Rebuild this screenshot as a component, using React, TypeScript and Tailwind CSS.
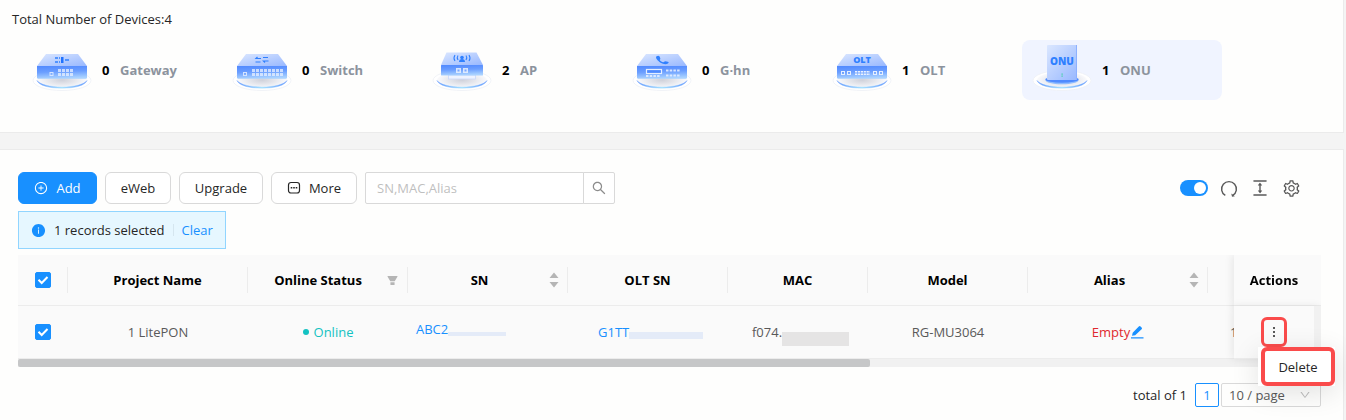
import React, { useState } from 'react';
import {
  AiFillFilter,
  AiFillInfoCircle,
  AiOutlineColumnHeight,
  AiOutlineDown,
  AiOutlinePlusCircle,
  AiOutlineSearch,
  AiOutlineSetting,
} from 'react-icons/ai';
import clsx from 'clsx';

type DeviceKind = 'Gateway' | 'Switch' | 'AP' | 'G·hn' | 'OLT' | 'ONU';

const devices: { kind: DeviceKind; count: number }[] = [
  { kind: 'Gateway', count: 0 },
  { kind: 'Switch', count: 0 },
  { kind: 'AP', count: 2 },
  { kind: 'G·hn', count: 0 },
  { kind: 'OLT', count: 1 },
  { kind: 'ONU', count: 1 },
];

// Shared gradients for the device drawings
function DeviceDefs() {
  return (
    <svg width="0" height="0" className="absolute" aria-hidden="true">
      <defs>
        <linearGradient id="lid" x1="0" y1="0" x2="1" y2="1">
          <stop offset="0" stopColor="#dbe7ff" />
          <stop offset="1" stopColor="#98b8ff" />
        </linearGradient>
        <linearGradient id="front" x1="0" y1="0" x2="0.15" y2="1">
          <stop offset="0" stopColor="#5089ff" />
          <stop offset="0.5" stopColor="#6c9fff" />
          <stop offset="1" stopColor="#a9d2ff" />
        </linearGradient>
        <linearGradient id="ring" x1="0" y1="0" x2="1" y2="0">
          <stop offset="0" stopColor="#5f97ff" />
          <stop offset="0.5" stopColor="#a8e2ff" />
          <stop offset="1" stopColor="#5f97ff" />
        </linearGradient>
        <radialGradient id="plate">
          <stop offset="0" stopColor="#cfd1da" />
          <stop offset="0.8" stopColor="#f1f2f6" />
          <stop offset="1" stopColor="#fafafc" />
        </radialGradient>
      </defs>
    </svg>
  );
}

function Ports({ x, y, count, rows = 1 }: { x: number; y: number; count: number; rows?: number }) {
  return (
    <g fill="#eaf2ff">
      {Array.from({ length: count * rows }, (_, i) => (
        <rect key={i} x={x + (i % count) * 4} y={y + Math.floor(i / count) * 4} width="3" height="3" opacity="0.75" />
      ))}
    </g>
  );
}

function DeviceArt({ kind }: { kind: DeviceKind }) {
  return (
    <svg width="60" height="52" viewBox="0 0 60 52" className="shrink-0" aria-hidden="true">
      <ellipse cx="30" cy="36.5" rx="29" ry="10" fill="#fff" stroke="#eef0f5" strokeWidth="0.8" />
      <ellipse cx="30" cy="36" rx="25" ry="8" fill="url(#plate)" />
      <path d="M5 36.5C7 41.5 17 44.2 30 44.2S53 41.5 55 36.5C52 40.6 42 43 30 43S8 40.6 5 36.5Z" fill="url(#ring)" stroke="url(#ring)" strokeWidth="0.4" />

      {kind === 'ONU' ? (
        <>
          <path d="M13.5 34.5h33v1.8c0 2.3-7 4-16.5 4s-16.5-1.7-16.5-4z" fill="#8fbcff" />
          <ellipse cx="30" cy="35.5" rx="16.5" ry="3.2" fill="#4f8bff" />
          <rect x="15" y="1" width="30" height="35" rx="1" fill="url(#lid)" />
          <rect x="44" y="1" width="1" height="35" fill="#8db1ff" />
          <text x="30" y="20.5" textAnchor="middle" fontSize="10" fontWeight="800" fill="#2f80ff">ONU</text>
          <rect x="29.5" y="29.5" width="1.2" height="1.2" fill="#38d39f" />
          <rect x="29.5" y="31.5" width="1.2" height="1.2" fill="#38d39f" />
        </>
      ) : kind === 'AP' ? (
        <>
          <rect x="16.5" y="31" width="27" height="4" fill="#eef3ff" stroke="#c9d8fb" strokeWidth="0.8" />
          <path d="M14.5 8.5h30L51 21H9z" fill="url(#lid)" />
          <rect x="9" y="21" width="42" height="10.5" rx="0.5" fill="url(#front)" />
          <rect x="24" y="24" width="5" height="5" fill="#eaf2ff" opacity="0.85" />
          <rect x="31" y="24" width="5" height="5" fill="#eaf2ff" opacity="0.85" />
          <rect x="25.5" y="25.5" width="2" height="2" fill="#7ba8ff" />
          <rect x="32.5" y="25.5" width="2" height="2" fill="#7ba8ff" />
          <circle cx="30" cy="13.5" r="1.8" fill="#2f80ff" />
          <path d="M27 18c0-2 1.2-3 3-3s3 1 3 3z" fill="#2f80ff" />
          <path d="M26 11.500q-1.500 2 0 4.500M34 11.500q1.500 2 0 4.500M23 11q-2 3 0 6M37 11q2 3 0 6" fill="none" stroke="#2f80ff" strokeWidth="1.1" />
        </>
      ) : (
        <>
          <path d="M14 10h32l9 12H5z" fill="url(#lid)" />
          <path d="M5 22h50v11.5q0 1.3-1.3 1.3H6.3Q5 34.8 5 33.5z" fill="url(#front)" />
        </>
      )}

      {kind === 'Gateway' && (
        <>
          <path d="M23 14h3M23 18h3M27 14h1M27 18h1M33 16h4" stroke="#2f80ff" strokeWidth="1.3" />
          <rect x="29" y="13" width="2.5" height="6" fill="#1f72ff" />
          <rect x="18" y="28.5" width="3" height="3" fill="none" stroke="#d5e4ff" />
          <Ports x={26} y={25} count={4} rows={2} />
        </>
      )}
      {kind === 'Switch' && (
        <>
          <path d="M29 14.5h-5l1.5-1.5M23.5 18h5M31 13.5h5M36.5 17h-5l1.5 1.5" fill="none" stroke="#2f80ff" strokeWidth="1.2" />
          <rect x="11.5" y="28.5" width="3" height="3" fill="none" stroke="#d5e4ff" />
          <Ports x={20} y={25} count={8} rows={2} />
        </>
      )}
      {kind === 'G·hn' && (
        <>
          <path d="M24.500 12.300C25.700 11.600 27 11.500 27.600 12.600L28.300 14.200C28.700 15.200 27.400 15.600 27.900 16.300C28.700 17.500 29.900 18 31.200 18.200C32.200 18.400 32.300 17.200 33.300 17.300L35.800 17.800C37 18.100 36.800 19 35.900 19.500C34 20.600 31 20.200 28.600 18.700C25.600 16.800 23 13.900 24.500 12.300Z" fill="#2f80ff" />
          <rect x="14.5" y="25.500" width="15" height="4" fill="#4f8bff" stroke="#e5efff" strokeWidth="1.2" />
          <path d="M34 26.500h14M34 31.500h14M14 32h14" stroke="#eaf2ff" strokeWidth="1.800" strokeDasharray="2.500 1.200" opacity="0.85" />
        </>
      )}
      {kind === 'OLT' && (
        <>
          <text x="30" y="18.5" textAnchor="middle" fontSize="9" fontWeight="800" fill="#2f80ff">OLT</text>
          <rect x="9.5" y="27.5" width="3" height="3" fill="none" stroke="#e5efff" />
          <rect x="15.5" y="27.5" width="3" height="3" fill="none" stroke="#e5efff" />
          <path d="M23 27.800h15M23 30.200h15" stroke="#eaf2ff" strokeWidth="1.600" strokeDasharray="2.200 0.700" />
          <rect x="41.5" y="27.5" width="3" height="3" fill="none" stroke="#e5efff" />
          <rect x="47.5" y="27.5" width="3" height="3" fill="none" stroke="#e5efff" />
        </>
      )}
    </svg>
  );
}

function Checkbox({ label }: { label: string }) {
  return (
    <label className="grid size-4">
      <input
        type="checkbox"
        defaultChecked
        aria-label={label}
        className="peer [grid-area:1/1] size-4 appearance-none rounded-xs border border-gray-300 bg-white checked:border-[#1890ff] checked:bg-[#1890ff]"
      />
      <svg viewBox="0 0 16 16" className="pointer-events-none invisible [grid-area:1/1] size-4 peer-checked:visible" fill="none" stroke="#fff" strokeWidth="2">
        <path d="M3.500 7.800l3.200 3.200 5.800-6" />
      </svg>
    </label>
  );
}

function Sorter() {
  return (
    <button aria-label="Sort" className="block">
      <svg width="10" height="16" viewBox="0 0 10 16" fill="#b5b5b5">
        <path d="M5 0.500L9.500 6h-9zM5 15.500L9.500 10h-9z" />
      </svg>
    </button>
  );
}

function HeadCell({ title, icon }: { title: string; icon?: React.ReactNode }) {
  return (
    <th className="border-b border-[#ececec] bg-[#fafafa] p-0 font-bold text-black">
      <div className={clsx('flex h-[26px] items-center border-r border-[#ececec]', icon && 'gap-[6px] px-2')}>
        <span className="flex-1 text-center">{title}</span>
        {icon}
      </div>
    </th>
  );
}

const buttonClass = 'flex h-8 items-center justify-center rounded-md border';
const cellClass = 'h-[53px] border-b border-[#ececec] bg-[#fafafa] p-0 text-center text-[#595959]';

export default function App() {
  const [selected, setSelected] = useState<DeviceKind>('ONU');
  const [keyword, setKeyword] = useState('');

  return (
    <main className="bg-[#f4f4f4] pr-[2px] font-['Open_Sans','Noto_Sans',sans-serif] text-[13px] leading-5 text-[#262626]">
      <DeviceDefs />

      {/* Device summary */}
      <section className="h-[133px] border-r border-b border-[#ebebeb] bg-[#fefefd] pt-[9px]">
        <h1 className="pl-3">Total Number of Devices:4</h1>
        <div className="mt-[11px] flex pl-[22px]">
          {devices.map(({ kind, count }) => (
            <button
              key={kind}
              onClick={() => setSelected(kind)}
              className={clsx(
                'flex h-[60px] w-[200px] items-center rounded-lg pl-[10px] font-bold',
                selected === kind && 'bg-[#f0f4ff]'
              )}
            >
              <DeviceArt kind={kind} />
              <span className="ml-[10px] w-[18px] text-left text-black">{count}</span>
              <span className="text-[#8c939d]">{kind}</span>
            </button>
          ))}
        </div>
      </section>

      {/* Device list */}
      <section className="mt-4 border-t border-r border-[#ebebeb] bg-[#fefefd] pt-[22px] pr-[22px] pb-[13px] pl-[18px]">
        <div className="flex items-center justify-between">
          <div className="flex gap-2">
            <button className={clsx(buttonClass, 'w-[79px] gap-2 border-[#1890ff] bg-[#1890ff] font-medium text-white')}>
              <AiOutlinePlusCircle size={14} />
              Add
            </button>
            <button className={clsx(buttonClass, 'w-[66px] border-[#d9d9d9] bg-white')}>eWeb</button>
            <button className={clsx(buttonClass, 'w-[84px] border-[#d9d9d9] bg-white')}>Upgrade</button>
            <button className={clsx(buttonClass, 'w-[86px] gap-2 border-[#d9d9d9] bg-white')}>
              <svg width="14" height="14" viewBox="0 0 14 14" fill="none" stroke="#262626">
                <rect x="1.500" y="1.500" width="11" height="10.500" rx="2.500" strokeWidth="1.200" />
                <path d="M3.700 6.700h1.600M6.200 6.700h1.600M8.700 6.700h1.600" strokeWidth="1.400" />
              </svg>
              More
            </button>
            <form className="flex h-8" onSubmit={(e) => e.preventDefault()}>
              <input
                type="text"
                aria-label="Search devices"
                placeholder="SN,MAC,Alias"
                value={keyword}
                onChange={(e) => setKeyword(e.target.value)}
                className="w-[219px] rounded-l-xs border border-[#d9d9d9] bg-white px-[11px] placeholder:text-[#bfbfbf] focus:outline-none"
              />
              <button aria-label="Search" className="-ml-px flex w-8 items-center justify-center rounded-r-xs border border-[#d9d9d9] bg-white text-[#8c8c8c]">
                <AiOutlineSearch size={16} />
              </button>
            </form>
          </div>

          <div className="mr-5 flex items-center gap-3 text-[#595959]">
            <input
              type="checkbox"
              role="switch"
              defaultChecked
              aria-label="Auto refresh"
              className="h-4 w-7 appearance-none rounded-full bg-[#bfbfbf] p-[2px] before:block before:size-3 before:rounded-full before:bg-white checked:bg-[#1890ff] checked:before:ml-auto"
            />
            <button aria-label="Reload">
              <svg width="18" height="18" viewBox="0 0 18 18" fill="none" stroke="#595959" strokeWidth="1.400">
                <path d="M5.300 16.400A7.400 7.400 0 1 1 12.700 16.400" />
                <path d="M11.300 14.600l.7 3.200 2.900-.6z" fill="#595959" stroke="none" />
              </svg>
            </button>
            <button aria-label="Row height">
              <AiOutlineColumnHeight size={20} />
            </button>
            <button aria-label="Settings">
              <AiOutlineSetting size={19} />
            </button>
          </div>
        </div>

        <div role="status" className="mt-[7px] flex h-[38px] w-[208px] items-center border border-[#91d5ff] bg-[#e6f7ff] pl-3 whitespace-nowrap">
          <AiFillInfoCircle size={15} className="text-[#1890ff]" />
          <span className="ml-2">1 records selected</span>
          <span className="mx-2 h-3 w-px bg-[#d5e6ef]" />
          <a href="#clear" className="text-[#1890ff]">Clear</a>
        </div>

        <div className="relative mt-[6px]">
          <div className="overflow-hidden">
            <table className="w-[1990px] table-fixed border-separate border-spacing-0">
              <colgroup>
                <col className="w-[50px]" />
                <col className="w-[180px]" />
                <col className="w-[160px]" />
                <col className="w-[160px]" />
                <col className="w-[160px]" />
                <col className="w-[140px]" />
                <col className="w-[160px]" />
                <col className="w-[180px]" />
                <col />
                <col className="w-[87px]" />
              </colgroup>
              <thead>
                <tr className="h-[51px]">
                  <th className="border-b border-[#ececec] bg-[#fafafa] p-0">
                    <div className="flex h-[26px] items-center justify-center border-r border-[#ececec]">
                      <Checkbox label="Select all" />
                    </div>
                  </th>
                  <HeadCell title="Project Name" />
                  <HeadCell title="Online Status" icon={<AiFillFilter size={13} className="text-[#b5b5b5]" />} />
                  <HeadCell title="SN" icon={<Sorter />} />
                  <HeadCell title="OLT SN" />
                  <HeadCell title="MAC" />
                  <HeadCell title="Model" />
                  <HeadCell title="Alias" icon={<Sorter />} />
                  <HeadCell title="" />
                  <th className="sticky right-0 border-b border-[#ececec] bg-[#fafafa] p-0 pr-[7px] font-bold text-black shadow-[-2px_0_8px_rgba(0,0,0,0.08)]">
                    Actions
                  </th>
                </tr>
              </thead>
              <tbody>
                <tr>
                  <td className={cellClass}>
                    <div className="flex justify-center">
                      <Checkbox label="Select 1 LitePON" />
                    </div>
                  </td>
                  <td className={cellClass}>1 LitePON</td>
                  <td className={cellClass}>
                    <span className="flex items-center justify-center gap-[5px] text-[#13c2c2]">
                      <span className="size-[6px] rounded-full bg-[#13c2c2]" />
                      Online
                    </span>
                  </td>
                  <td className={cellClass}>
                    <a href="#sn" className="flex items-end pb-[6px] pl-2 text-[#1890ff]">
                      ABC2
                      <span className="mb-[3px] h-1 w-[58px] bg-[#e4ebf8]" />
                    </a>
                  </td>
                  <td className={cellClass}>
                    <a href="#olt" className="flex items-end pl-[30px] text-[#1890ff]">
                      G1TT
                      <span className="mb-[3px] h-[7px] w-[74px] bg-[#e4ebf8]" />
                    </a>
                  </td>
                  <td className={cellClass}>
                    <span className="flex h-5 items-start pl-6">
                      f074.
                      <span className="mt-[10px] h-[14px] w-[67px] bg-[#e5e4e4]" />
                    </span>
                  </td>
                  <td className={cellClass}>RG-MU3064</td>
                  <td className={cellClass}>
                    <span className="flex items-center justify-center text-[#e0282e]">
                      Empty
                      <button aria-label="Edit alias">
                        <svg width="14" height="14" viewBox="0 0 14 14" fill="#1890ff">
                          <path d="M1 12.300h12.500v1.300H1zM2 10.800L2.700 7.800L8.800 1.500Q9.700 .6 10.600 1.500L11.600 2.500Q12.500 3.400 11.600 4.300L5.200 10.300z" />
                        </svg>
                      </button>
                    </span>
                  </td>
                  <td className={cellClass}>
                    <span className="block pl-[22px] text-left">1</span>
                  </td>
                  <td className="sticky right-0 border-r-[7px] border-b border-r-[#f1f1f1] border-b-[#ececec] bg-[#fafafa] p-0 shadow-[-2px_0_8px_rgba(0,0,0,0.08)]">
                    <button
                      aria-label="More actions"
                      className="mx-auto flex h-[30px] w-[26px] items-center justify-center rounded-md border-[3px] border-[#fa4b4b] bg-[#fafafa]"
                    >
                      <svg width="4" height="12" viewBox="0 0 4 12" fill="#595959">
                        <rect x="1" y="1" width="2" height="2" />
                        <rect x="1" y="5" width="2" height="2" />
                        <rect x="1" y="9" width="2" height="2" />
                      </svg>
                    </button>
                  </td>
                </tr>
              </tbody>
            </table>
            {/* Horizontal scroll bar */}
            <div className="h-2 bg-[#f1f1f1]">
              <div className="h-full w-[65.4%] rounded-xs bg-[#c6c7c8]" />
            </div>
          </div>

          {/* Actions menu */}
          <div role="menu" className="absolute top-[92px] -right-[14px] bg-white pl-[3px] shadow-[0_6px_28px_rgba(0,0,0,0.12)]">
            <button role="menuitem" className="flex h-[39px] w-[74px] items-center justify-center rounded-md border-4 border-[#fa4b4b] bg-white">
              Delete
            </button>
          </div>
        </div>

        <nav aria-label="Pagination" className="mt-4 flex items-center justify-end">
          <span className="mr-2">total of 1</span>
          <button aria-current="page" className="size-6 rounded-xs border border-[#1890ff] bg-white leading-5 font-medium text-[#1890ff]">1</button>
          <div className="ml-[2px] grid w-[100px] items-center">
            <select aria-label="Page size" className="[grid-area:1/1] h-6 appearance-none rounded-xs border border-[#d9d9d9] bg-transparent pl-[7px] text-[#595959]">
              <option>10 / page</option>
              <option>20 / page</option>
              <option>50 / page</option>
            </select>
            <AiOutlineDown size={12} className="pointer-events-none [grid-area:1/1] mr-[10px] justify-self-end text-[#bfbfbf]" />
          </div>
        </nav>
      </section>
    </main>
  );
}
